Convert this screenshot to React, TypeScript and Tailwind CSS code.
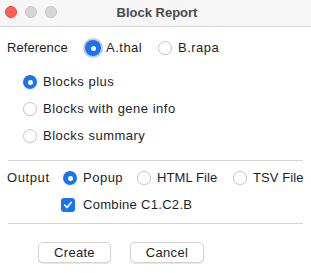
import React from 'react'

// macOS-style radio button
function Radio({ checked, focused }: { checked?: boolean; focused?: boolean }) {
  if (checked) {
    return (
      <span
        className={
          'flex h-[14px] w-[14px] shrink-0 items-center justify-center rounded-full bg-[#1a73f0] ' +
          (focused ? 'shadow-[0_0_0_1px_#3a6fc0,0_0_0_3px_rgba(90,140,220,0.45)]' : '')
        }
      >
        <span className="h-[5px] w-[5px] rounded-full bg-white" />
      </span>
    )
  }
  return (
    <span className="h-[14px] w-[14px] shrink-0 rounded-full border border-[#c9c9c9] bg-white shadow-[0_0.5px_1px_rgba(0,0,0,0.08)]" />
  )
}

function Checkbox() {
  return (
    <span className="flex h-[14px] w-[14px] shrink-0 items-center justify-center rounded-[3px] bg-[#1a73f0]">
      <svg width="10" height="10" viewBox="0 0 10 10" fill="none">
        <path d="M1.8 5.2 L4 7.5 L8.3 2.3" stroke="white" strokeWidth="1.7" strokeLinecap="round" strokeLinejoin="round" />
      </svg>
    </span>
  )
}

function Option({
  label,
  checked,
  focused,
  width,
  wide = true,
}: {
  label: string
  checked?: boolean
  focused?: boolean
  width?: string
  wide?: boolean
}) {
  return (
    <div className={'flex items-center ' + (width ?? '')}>
      <Radio checked={checked} focused={focused} />
      <span className={'ml-[6px] ' + (wide ? 'tracking-[0.5px]' : 'tracking-[0.1px]')}>{label}</span>
    </div>
  )
}

export default function App() {
  return (
    <div
      className="flex h-[273px] w-[311px] flex-col overflow-hidden bg-white text-[13px] text-[#1e1e1e]"
      style={{ fontFamily: '"Liberation Sans", Arial, sans-serif' }}
    >
      {/* Title bar */}
      <div className="relative flex h-[27px] shrink-0 items-center border-b border-[#d9d9d9] bg-[#f6f6f6]">
        <div className="absolute left-[5px] top-[6px] flex gap-[8px]">
          <span className="h-[12px] w-[12px] rounded-full bg-[#fe5f57] border border-[#e2463f]" />
          <span className="h-[12px] w-[12px] rounded-full bg-[#d6d6d6] border border-[#c4c4c4]" />
          <span className="h-[12px] w-[12px] rounded-full bg-[#d6d6d6] border border-[#c4c4c4]" />
        </div>
        <div className="w-full pl-[3px] text-center font-bold text-[#4a4a4a]">Block Report</div>
      </div>

      {/* Reference */}
      <div className="mt-[11px] flex h-[20px] items-center pl-[7px]">
        <span className="w-[79px] tracking-[0.1px]">Reference</span>
        <Option label="A.thal" checked focused width="w-[72px]" />
        <Option label="B.rapa" />
      </div>

      {/* Report types */}
      <div className="mt-[14px] flex flex-col gap-[7px] pl-[23px]">
        <div className="flex h-[20px] items-center">
          <Option label="Blocks plus" checked />
        </div>
        <div className="flex h-[20px] items-center">
          <Option label="Blocks with gene info" />
        </div>
        <div className="flex h-[20px] items-center">
          <Option label="Blocks summary" />
        </div>
      </div>

      <div className="mx-[8px] mt-[14px] h-px bg-[#d4d4d4]" />

      {/* Output */}
      <div className="mt-[7px] flex h-[20px] items-center pl-[7px]">
        <span className="w-[56px] tracking-[0.6px]">Output</span>
        <Option label="Popup" checked width="w-[74px]" />
        <Option label="HTML File" width="w-[96px]" wide={false} />
        <Option label="TSV File" wide={false} />
      </div>
      <div className="mt-[7px] flex h-[20px] items-center pl-[61px]">
        <Checkbox />
        <span className="ml-[8px] tracking-[0.3px]">Combine C1.C2.B</span>
      </div>

      <div className="mx-[8px] mt-[8px] h-px bg-[#d4d4d4]" />

      {/* Buttons */}
      <div className="mt-[18px] flex gap-[19px] pl-[38px]">
        <button className="h-[21px] w-[73px] rounded-[5px] border border-[#d2d2d2] bg-white tracking-[0.3px] shadow-[0_1px_1px_rgba(0,0,0,0.1)]">
          Create
        </button>
        <button className="h-[21px] w-[74px] rounded-[5px] border border-[#d2d2d2] bg-white tracking-[0.3px] shadow-[0_1px_1px_rgba(0,0,0,0.1)]">
          Cancel
        </button>
      </div>
    </div>
  )
}
